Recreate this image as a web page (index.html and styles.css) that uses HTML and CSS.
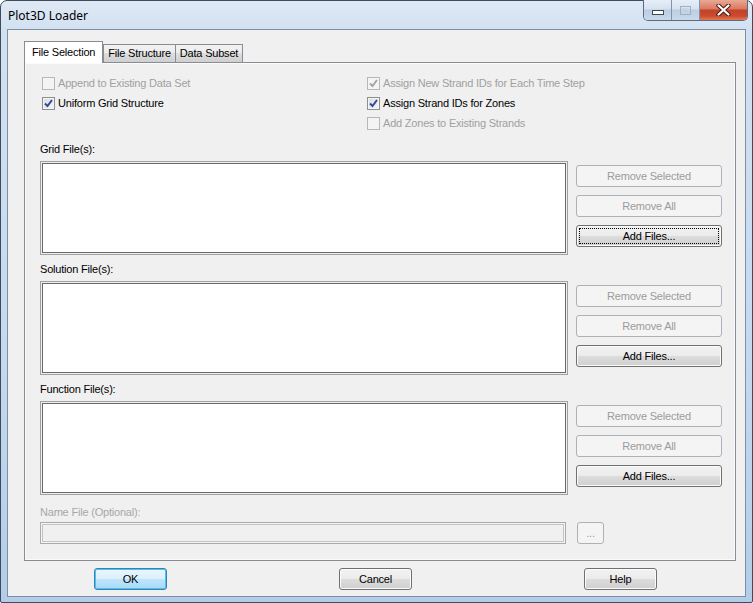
FILE: index.html
```html
<!DOCTYPE html>
<html lang="en">
<head>
  <meta charset="UTF-8" />
  <title>Plot3D Loader</title>
  <link rel="stylesheet" href="styles.css">
</head>
<body>

  <div class="window">
    <div class="titlebar">
      <span class="title">Plot3D Loader</span>
      <div class="caption-btns">
        <span class="cap cap-min">
          <svg width="12" height="5" viewBox="0 0 12 5"><rect x="0.5" y="0.5" width="11" height="4" fill="#fff" stroke="#3b4a5c"/></svg>
        </span>
        <span class="cap cap-max">
          <svg width="11" height="9" viewBox="0 0 11 9"><rect x="0.5" y="0.5" width="10" height="8" fill="none" stroke="#9fb0c4"/><rect x="2.5" y="2.5" width="6" height="4" fill="none" stroke="#c9d5e2"/></svg>
        </span>
        <span class="cap cap-close">
          <svg width="15" height="12" viewBox="0 0 15 12">
            <path d="M2.5 1.5 L12.5 10.5 M12.5 1.5 L2.5 10.5" stroke="#4a1a10" stroke-width="4.2" stroke-linecap="round"/>
            <path d="M2.5 1.5 L12.5 10.5 M12.5 1.5 L2.5 10.5" stroke="#fff" stroke-width="2.2" stroke-linecap="round"/>
          </svg>
        </span>
      </div>
    </div>

    <div class="client">
      <div class="tabs">
        <div class="tab active">File Selection</div>
        <div class="tab">File Structure</div>
        <div class="tab">Data Subset</div>
      </div>

      <div class="page">
        <div class="options">
          <div class="col">
            <label class="check disabled"><span class="box"></span>Append to Existing Data Set</label>
            <label class="check"><span class="box"><svg width="11" height="11" viewBox="0 0 11 11"><path d="M2 5.5 L4.5 8 L9 2" fill="none" stroke="#2a4a9c" stroke-width="2"/></svg></span>Uniform Grid Structure</label>
          </div>
          <div class="col">
            <label class="check disabled"><span class="box"><svg width="11" height="11" viewBox="0 0 11 11"><path d="M2 5.5 L4.5 8 L9 2" fill="none" stroke="#a5a5a5" stroke-width="2"/></svg></span>Assign New Strand IDs for Each Time Step</label>
            <label class="check"><span class="box"><svg width="11" height="11" viewBox="0 0 11 11"><path d="M2 5.5 L4.5 8 L9 2" fill="none" stroke="#2a4a9c" stroke-width="2"/></svg></span>Assign Strand IDs for Zones</label>
            <label class="check disabled"><span class="box"></span>Add Zones to Existing Strands</label>
          </div>
        </div>

        <div class="section">
          <div class="caption">Grid File(s):</div>
          <div class="row">
            <div class="listbox"></div>
            <div class="side-btns">
              <button disabled>Remove Selected</button>
              <button disabled>Remove All</button>
              <button class="focused">Add Files...</button>
            </div>
          </div>
        </div>

        <div class="section">
          <div class="caption">Solution File(s):</div>
          <div class="row">
            <div class="listbox"></div>
            <div class="side-btns">
              <button disabled>Remove Selected</button>
              <button disabled>Remove All</button>
              <button>Add Files...</button>
            </div>
          </div>
        </div>

        <div class="section">
          <div class="caption">Function File(s):</div>
          <div class="row">
            <div class="listbox"></div>
            <div class="side-btns">
              <button disabled>Remove Selected</button>
              <button disabled>Remove All</button>
              <button>Add Files...</button>
            </div>
          </div>
        </div>

        <div class="caption disabled name-caption">Name File (Optional):</div>
        <div class="name-row">
          <div class="textbox"></div>
          <button class="browse" disabled>...</button>
        </div>
      </div>

      <div class="footer">
        <div><button class="default">OK</button></div>
        <div><button>Cancel</button></div>
        <div><button>Help</button></div>
      </div>
    </div>
  </div>

</body>
</html>
```

FILE: styles.css
```css
body {
  margin: 0;
  font-family: "Liberation Sans", Arial, sans-serif;
  font-size: 11px;
  letter-spacing: -0.2px;
  color: #000;
  background: #fff;
}

.window {
  width: 753px;
  height: 603px;
  box-sizing: border-box;
  border: 1px solid #3e4b5a;
  border-radius: 7px 7px 2px 2px;
  padding: 0 6px 5px 6px;
  background: linear-gradient(180deg, #dfe9f5 0, #d2e1f1 28px, #c5d9ee 60%, #b3cde8 100%);
}

.titlebar {
  height: 28px;
  display: flex;
  justify-content: space-between;
  align-items: flex-start;
}

.title {
  font-family: "Noto Sans", "DejaVu Sans", sans-serif;
  font-size: 12px;
  letter-spacing: 0;
  padding: 6px 0 0 1px;
  color: #000;
}

.caption-btns {
  display: flex;
  margin-right: -2px;
  margin-top: -1px;
  height: 20px;
  border: 1px solid #5c6b7d;
  border-top: none;
  border-radius: 0 0 5px 5px;
  overflow: hidden;
}

.cap {
  display: flex;
  align-items: center;
  justify-content: center;
  height: 20px;
}

.cap-min, .cap-max {
  width: 27px;
  background: linear-gradient(180deg, #e6eef8 0, #d6e2f0 45%, #bccde2 50%, #c9d9ec 100%);
  border-right: 1px solid #8294aa;
}

.cap-min svg {
  margin-top: 5px;
}

.cap-close {
  width: 47px;
  background: linear-gradient(180deg, #e9a996 0, #d9785f 45%, #c3432a 50%, #cc4a2c 80%, #e07a55 100%);
}

.client {
  height: 568px;
  box-sizing: border-box;
  border: 1px solid #7d8fa4;
  background: #f0f0f0;
}

/* tabs */
.tabs {
  display: flex;
  align-items: flex-end;
  margin: 11px 0 0 16px;
  height: 21px;
}

.tab {
  height: 17px;
  line-height: 17px;
  padding: 0 4px;
  border: 1px solid #898c95;
  border-bottom: none;
  margin-left: -1px;
  background: linear-gradient(180deg, #f2f2f2 0, #ebebeb 50%, #dddddd 50%, #cfcfcf 100%);
}

.tab.active {
  height: 21px;
  line-height: 21px;
  padding: 0 7px;
  margin-left: 0;
  margin-bottom: -1px;
  margin-right: 1px;
  background: #fff;
  position: relative;
  z-index: 1;
}

.page {
  margin: 0 9px 0 16px;
  height: 499px;
  box-sizing: border-box;
  border: 1px solid #898c95;
  box-shadow: inset 0 0 0 1px #fbfbfb;
  padding: 10px 0 0 15px;
}

/* check boxes */
.options {
  display: grid;
  grid-template-columns: 325px 1fr;
  height: 60px;
}

.check {
  display: flex;
  align-items: center;
  height: 20px;
  padding-left: 2px;
}

.check.disabled {
  color: #a0a0a0;
}

.box {
  width: 11px;
  height: 11px;
  border: 1px solid #8e8f8f;
  margin-right: 3px;
  background: linear-gradient(135deg, #dcdcdc 0, #f6f6f6 100%);
  box-shadow: inset 0 0 0 1px #f4f4f4;
  display: flex;
}

.check.disabled .box {
  border-color: #b8b8b8;
  background: #f4f4f4;
}

/* file lists */
.section {
  margin-top: 9px;
}

.section + .section {
  margin-top: 7px;
}

.caption {
  height: 14px;
  line-height: 14px;
  margin-bottom: 5px;
}

.caption.disabled {
  color: #a7a7a7;
}

.row {
  display: flex;
  gap: 8px;
}

.listbox {
  width: 528px;
  height: 94px;
  box-sizing: border-box;
  border: 1px solid #a0a0a0;
  background: #fff;
  box-shadow: inset 0 0 0 1px #f0f0f0, inset 0 0 0 2px #696969;
}

.side-btns {
  display: flex;
  flex-direction: column;
  gap: 8px;
  padding-top: 4px;
}

button {
  font-family: "Liberation Sans", Arial, sans-serif;
  font-size: 11px;
  letter-spacing: -0.2px;
  color: #000;
  width: 146px;
  height: 22px;
  padding: 0;
  border: 1px solid #707070;
  border-radius: 3px;
  background: linear-gradient(180deg, #f2f2f2 0, #ebebeb 50%, #dddddd 50%, #cfcfcf 100%);
  box-shadow: inset 0 0 0 1px #fbfbfb;
}

button:disabled {
  color: #9c9c9c;
  border-color: #adb2b5;
  background: #f4f4f4;
  box-shadow: none;
}

button.focused {
  outline: 1px dotted #000;
  outline-offset: -4px;
}

.name-caption {
  margin: 10px 0 3px;
}

.name-row {
  display: flex;
  gap: 11px;
}

.textbox {
  width: 526px;
  height: 22px;
  box-sizing: border-box;
  border: 1px solid #ababab;
  box-shadow: inset 0 0 0 1px #f4f4f4, inset 0 0 0 2px #c4c4c4;
  background: #f0f0f0;
}

button.browse {
  width: 27px;
}

/* dialog buttons */
.footer {
  display: grid;
  grid-template-columns: repeat(3, 245px);
  margin-top: 7px;
}

.footer div {
  display: flex;
  justify-content: center;
}

.footer button {
  width: 73px;
}

.footer button.default {
  border-color: #3c7fb1;
  background: linear-gradient(180deg, #eaf6fd 0, #d9f0fc 50%, #bee6fd 50%, #a7d9f5 100%);
  box-shadow: inset 0 0 0 1px #48c4f0;
}
```
